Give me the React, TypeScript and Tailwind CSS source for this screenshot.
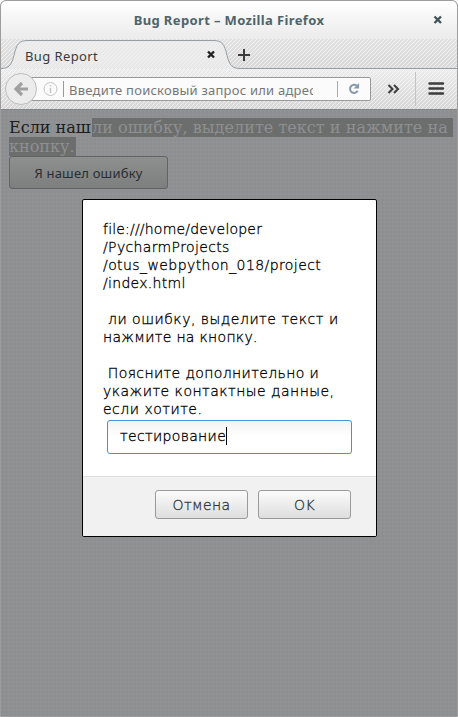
import type { ReactNode } from 'react';

const ui = "font-['Noto_Sans','Open_Sans',sans-serif]";

function Stripes({ id }: { id: string }) {
  return (
    <svg className="absolute inset-0 h-full w-full" shapeRendering="crispEdges">
      <defs>
        <pattern id={id} width="4" height="4" patternUnits="userSpaceOnUse">
          <path d="M0 3h1v1H0zM1 2h1v1H1zM2 1h1v1H2zM3 0h1v1H3z" fill="#fff" fillOpacity=".6" />
        </pattern>
      </defs>
      <rect width="100%" height="100%" fill={`url(#${id})`} />
    </svg>
  );
}

function TitleBar() {
  return (
    <header className="relative flex h-[38px] shrink-0 items-center justify-center bg-linear-to-b from-white to-[#ebebeb]">
      <h1 className={`${ui} whitespace-nowrap text-[13px] font-bold leading-[18px] tracking-[0.37px] text-[#4f646b]`}>
        Bug Report – Mozilla Firefox
      </h1>
      <svg className="absolute left-[432px] top-[14px]" width="10" height="10" viewBox="0 0 10 10">
        <path d="M1.5 1.5 8 8M8 1.5 1.5 8" stroke="#43565d" strokeWidth="2.4" />
      </svg>
    </header>
  );
}

function TabStrip() {
  return (
    <div className="relative h-[30px] shrink-0 bg-linear-to-b from-[#e2e2e2] to-[#d8d8d8]">
      <Stripes id="tab-stripes" />
      <svg className="absolute inset-0" width="456" height="30" viewBox="0 0 456 30">
        <path
          d="M0 29.5C8 29.5 10.5 26 13 16.500C15.500 5 18 1.500 27 1.500H212C221 1.500 223.500 5 226 16.500C228.500 26 231 29.500 239 29.500H456V31H0Z"
          fill="#efefef"
          fillOpacity=".7"
          stroke="#969ea4"
        />
        <path d="M207 12.500 213 18.500M213 12.500 207 18.500" stroke="#222" strokeWidth="2.400" />
        <path d="M237 16H249M243 10V22" stroke="#3b3b3b" strokeWidth="2" />
      </svg>
      <span className={`${ui} relative ml-6 block whitespace-nowrap pt-[8px] text-[13px] leading-[18px] tracking-[0.4px] text-[#3a3a3a]`}>
        Bug Report
      </span>
    </div>
  );
}

function NavBar() {
  return (
    <div className="relative flex h-10 shrink-0 bg-linear-to-b from-[#ececec] to-[#d6d6d6]">
      <Stripes id="nav-stripes" />
      <div className="relative ml-5 mt-[8px] flex h-6 w-[350px] items-center rounded-[2px] border border-[#999] bg-[#fbfbfb] pl-[21px]">
        <svg className="shrink-0" width="15" height="16" viewBox="0 0 15 16" fill="none" stroke="#c4c4c4">
          <circle cx="7.500" cy="8" r="6.500" />
          <path d="M7.500 7V12M7.500 4V5.500" strokeWidth="1.500" />
        </svg>
        <span className="ml-[5px] h-4 w-px shrink-0 bg-[#999]" />
        <span className={`${ui} ml-[5px] w-[244px] shrink-0 overflow-hidden whitespace-nowrap pt-px text-[13px] leading-[20px] tracking-[0.23px] text-[#777]`}>
          Введите поисковый запрос или адрес
        </span>
        <span className="ml-[24px] h-4 w-px shrink-0 bg-[#aaa]" />
        <svg className="ml-[10px] shrink-0" width="12" height="12" viewBox="0 0 13 13">
          <path d="M9.500 3A4.400 4.400 0 1 0 10.500 8.500" fill="none" stroke="#8799aa" strokeWidth="2.200" />
          <path d="M12 0V6H6Z" fill="#8799aa" />
        </svg>
      </div>
      <svg className="absolute left-1 top-1" width="33" height="33" viewBox="0 0 33 33">
        <circle cx="16" cy="16" r="15.500" fill="#ececec" stroke="#bdbdbd" />
        <path d="M17 10 11 16 17 22M11.500 16H23" fill="none" stroke="#a0a0a0" strokeWidth="3.200" />
      </svg>
      <svg className="relative" width="86" height="40" viewBox="0 0 86 40">
        <path d="M17.500 16 21.500 20 17.500 24M23 16 27 20 23 24" fill="none" stroke="#3c3c3c" strokeWidth="2" />
        <path d="M44.500 3V37" stroke="#c4c4c4" />
        <path d="M58.500 14.500H72M58.500 19.500H72M58.500 24.500H72" stroke="#3d3d3d" strokeWidth="2.400" strokeLinecap="round" />
      </svg>
    </div>
  );
}

function DialogButton({ children }: { children: ReactNode }) {
  return (
    <button className="h-[29px] w-[93px] rounded-[3px] border border-[#9a9a9a] bg-linear-to-b from-[#fbfbfb] to-[#dedede] text-center text-[14px] leading-[26px] tracking-[0.4px] text-[#2e3436]">
      {children}
    </button>
  );
}

function PromptDialog() {
  return (
    <section className="absolute left-[81px] top-[198px] flex h-[338px] w-[295px] flex-col overflow-hidden rounded-[2px] border border-black bg-white font-['DejaVu_Sans',sans-serif] text-[14px] font-extralight text-black [-webkit-text-stroke:0.3px]">
      <div className="h-[276px] shrink-0 pl-5 pt-5">
        <p className="whitespace-pre leading-[18px]">
          <span className="block tracking-[0.2px]">file:///home/developer</span>
          <span className="block tracking-[0.36px]">/PycharmProjects</span>
          <span className="block tracking-[0.42px]">/otus_webpython_018/project</span>
          <span className="block tracking-[0.3px]">/index.html</span>
          <span className="mt-[18px] block tracking-[0.51px]"> ли ошибку, выделите текст и</span>
          <span className="block tracking-[0.3px]">нажмите на кнопку.</span>
          <span className="mt-[18px] block tracking-[0.38px]"> Поясните дополнительно и</span>
          <span className="block tracking-[0.47px]">укажите контактные данные,</span>
          <span className="block tracking-[0.5px]">если хотите.</span>
        </p>
        <div className="ml-1 mt-[2px] flex h-[34px] w-[245px] items-center rounded-[3px] border border-[#4a90d9] bg-linear-to-b from-[#f3f3f3] to-white to-50% pl-[12px] pb-[2px]">
          <span className="tracking-[0.33px]">тестирование</span>
          <span className="h-[18px] w-px bg-black" />
        </div>
      </div>
      <footer className="flex flex-1 gap-[10px] border-t border-[#dfdfdf] bg-[#f1f1f1] pl-[72px] pt-[13px]">
        <DialogButton>Отмена</DialogButton>
        <DialogButton>OK</DialogButton>
      </footer>
    </section>
  );
}

export default function App() {
  return (
    <div className="relative flex h-[717px] w-[458px] flex-col overflow-hidden rounded-t-[6px] border border-[#9d9d9d] bg-[#8f9191]">
      <TitleBar />
      <TabStrip />
      <NavBar />
      <main className="flex-1 border-t border-[#858585] bg-[#909192] bg-[radial-gradient(#8a8d91_0.8px,transparent_1px)] bg-size-[4px_4px] pl-2 pt-2">
        <p className="whitespace-nowrap font-['DejaVu_Serif',serif] text-[16px] font-light leading-[19px] text-[#1c1c1c]">
          <span className="flex">
            <span className="w-[83px]">Если наш</span>
            <span className="w-[361px] bg-[#6c6e6e] tracking-[0.04px] text-[#8e9090]">ли ошибку, выделите текст и нажмите на</span>
          </span>
          <span className="block w-[67px] bg-[#6c6e6e] text-[#8e9090]">кнопку.</span>
        </p>
        <button className={`${ui} block h-[33px] w-[159px] rounded-[3px] border border-[#626464] bg-linear-to-b from-[#8e9090] to-[#7d7f7f] text-[13px] leading-[30px] tracking-[0.2px] text-[#292d2f]`}>
          Я нашел ошибку
        </button>
      </main>
      <PromptDialog />
    </div>
  );
}
